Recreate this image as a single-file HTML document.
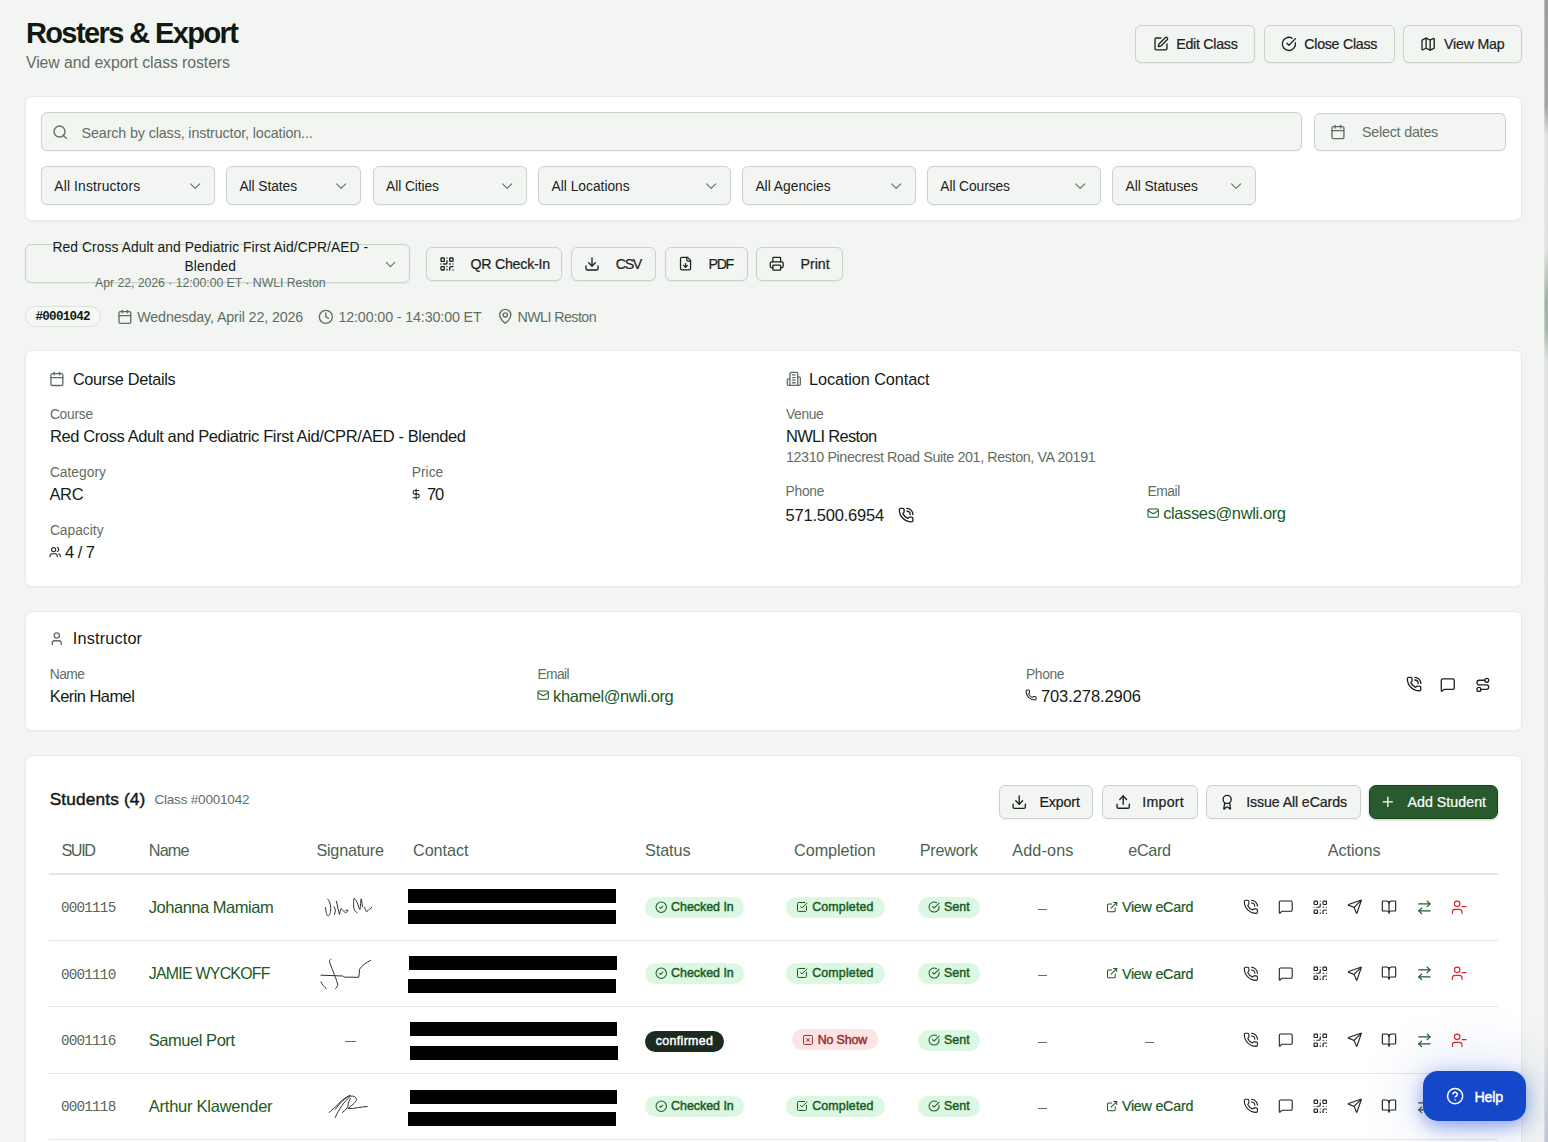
<!DOCTYPE html>
<html><head><meta charset="utf-8"><title>Rosters &amp; Export</title>
<style>
html,body{margin:0;padding:0;}
body{width:1548px;height:1142px;overflow:hidden;background:#f3f5f2;position:relative;font-family:'Liberation Sans',sans-serif;}
.t{position:absolute;white-space:nowrap;}
.r{position:absolute;}
.i{position:absolute;overflow:visible;}
</style></head><body>
<div class="t" style="left:25.90px;top:15.25px;font:700 29px/36px 'Liberation Sans',sans-serif;color:#111913;letter-spacing:-1.587px;">Rosters & Export</div>
<div class="t" style="left:26.00px;top:52.52px;font:400 15.8px/20px 'Liberation Sans',sans-serif;color:#5f6e63;letter-spacing:-0.075px;">View and export class rosters</div>
<div class="r" style="left:1135.10px;top:24.90px;width:120.30px;height:38.50px;background:#f3f5f2;border:1px solid #c9d3cb;border-radius:6px;box-sizing:border-box;box-shadow:0 1px 1px rgba(30,50,35,.05);"></div>
<svg class="i" style="left:1152.58px;top:36.39px;width:15.94px;height:15.94px" viewBox="0 0 24 24" fill="none" stroke="#1b231d" stroke-width="2" stroke-linecap="round" stroke-linejoin="round"><path d="M12 3H5a2 2 0 0 0-2 2v14a2 2 0 0 0 2 2h14a2 2 0 0 0 2-2v-7"/><path d="M18.375 2.625a1 1 0 0 1 3 3l-9.013 9.014a2 2 0 0 1-.853.505l-2.873.84a.5.5 0 0 1-.62-.62l.84-2.873a2 2 0 0 1 .506-.852z"/></svg>
<div class="t" style="left:1176.30px;top:35.18px;font:400 14.2px/18px 'Liberation Sans',sans-serif;color:#1b231d;letter-spacing:-0.267px;-webkit-text-stroke:0.22px #1b231d;">Edit Class</div>
<div class="r" style="left:1263.60px;top:24.90px;width:131.40px;height:38.50px;background:#f3f5f2;border:1px solid #c9d3cb;border-radius:6px;box-sizing:border-box;box-shadow:0 1px 1px rgba(30,50,35,.05);"></div>
<svg class="i" style="left:1280.59px;top:36.19px;width:15.81px;height:15.81px" viewBox="0 0 24 24" fill="none" stroke="#1b231d" stroke-width="2" stroke-linecap="round" stroke-linejoin="round"><path d="M21.801 10A10 10 0 1 1 17 3.335"/><path d="m9 11 3 3L22 4"/></svg>
<div class="t" style="left:1304.30px;top:35.18px;font:400 14.2px/18px 'Liberation Sans',sans-serif;color:#1b231d;letter-spacing:-0.265px;-webkit-text-stroke:0.22px #1b231d;">Close Class</div>
<div class="r" style="left:1403.20px;top:24.90px;width:118.80px;height:38.50px;background:#f3f5f2;border:1px solid #c9d3cb;border-radius:6px;box-sizing:border-box;box-shadow:0 1px 1px rgba(30,50,35,.05);"></div>
<svg class="i" style="left:1419.82px;top:35.97px;width:16.27px;height:16.27px" viewBox="0 0 24 24" fill="none" stroke="#1b231d" stroke-width="2" stroke-linecap="round" stroke-linejoin="round"><path d="M14.106 5.553a2 2 0 0 0 1.788 0l3.659-1.83A1 1 0 0 1 21 4.619v12.764a1 1 0 0 1-.553.894l-4.553 2.277a2 2 0 0 1-1.788 0l-4.212-2.106a2 2 0 0 0-1.788 0l-3.659 1.83A1 1 0 0 1 3 19.381V6.618a1 1 0 0 1 .553-.894l4.553-2.277a2 2 0 0 1 1.788 0z"/><path d="M15 5.764v15"/><path d="M9 3.236v15"/></svg>
<div class="t" style="left:1443.90px;top:35.18px;font:400 14.2px/18px 'Liberation Sans',sans-serif;color:#1b231d;letter-spacing:-0.171px;-webkit-text-stroke:0.22px #1b231d;">View Map</div>
<div class="r" style="left:25.20px;top:96.20px;width:1496.70px;height:125.00px;background:#fff;border:1px solid #e7eae6;border-radius:7px;box-sizing:border-box;box-shadow:0 1px 2px rgba(0,0,0,.03)"></div>
<div class="r" style="left:40.80px;top:112.30px;width:1260.90px;height:38.90px;background:#f3f5f2;border:1px solid #c9d3cb;border-radius:6px;box-sizing:border-box;box-shadow:0 1px 1px rgba(30,50,35,.05);"></div>
<svg class="i" style="left:52.32px;top:123.62px;width:16.45px;height:16.45px" viewBox="0 0 24 24" fill="none" stroke="#5f6e63" stroke-width="2" stroke-linecap="round" stroke-linejoin="round"><circle cx="11" cy="11" r="8"/><path d="m21 21-4.3-4.3"/></svg>
<div class="t" style="left:81.60px;top:123.64px;font:400 14.3px/18px 'Liberation Sans',sans-serif;color:#5f6e63;letter-spacing:-0.124px;">Search by class, instructor, location...</div>
<div class="r" style="left:1313.80px;top:112.60px;width:192.20px;height:38.40px;background:#f3f5f2;border:1px solid #c9d3cb;border-radius:6px;box-sizing:border-box;box-shadow:0 1px 1px rgba(30,50,35,.05);"></div>
<svg class="i" style="left:1330.49px;top:123.79px;width:15.92px;height:15.92px" viewBox="0 0 24 24" fill="none" stroke="#5f6e63" stroke-width="2" stroke-linecap="round" stroke-linejoin="round"><path d="M8 2v4"/><path d="M16 2v4"/><rect width="18" height="18" x="3" y="4" rx="2"/><path d="M3 10h18"/></svg>
<div class="t" style="left:1361.90px;top:123.34px;font:400 14.3px/18px 'Liberation Sans',sans-serif;color:#5f6e63;letter-spacing:-0.209px;">Select dates</div>
<div class="r" style="left:40.80px;top:166.40px;width:174.20px;height:38.60px;background:#f3f5f2;border:1px solid #c9d3cb;border-radius:6px;box-sizing:border-box;box-shadow:0 1px 1px rgba(30,50,35,.05);"></div>
<div class="t" style="left:54.30px;top:177.92px;font:400 13.8px/17px 'Liberation Sans',sans-serif;color:#1b231d;letter-spacing:0.157px;">All Instructors</div>
<svg class="i" style="left:185.79px;top:176.74px;width:18.32px;height:18.32px" viewBox="0 0 24 24" fill="none" stroke="#5f6e63" stroke-width="1.35" stroke-linecap="round" stroke-linejoin="round"><path d="m6 9 6 6 6-6"/></svg>
<div class="r" style="left:225.90px;top:166.40px;width:134.90px;height:38.60px;background:#f3f5f2;border:1px solid #c9d3cb;border-radius:6px;box-sizing:border-box;box-shadow:0 1px 1px rgba(30,50,35,.05);"></div>
<div class="t" style="left:239.40px;top:177.92px;font:400 13.8px/17px 'Liberation Sans',sans-serif;color:#1b231d;letter-spacing:-0.067px;">All States</div>
<svg class="i" style="left:331.59px;top:176.74px;width:18.32px;height:18.32px" viewBox="0 0 24 24" fill="none" stroke="#5f6e63" stroke-width="1.35" stroke-linecap="round" stroke-linejoin="round"><path d="m6 9 6 6 6-6"/></svg>
<div class="r" style="left:372.60px;top:166.40px;width:154.30px;height:38.60px;background:#f3f5f2;border:1px solid #c9d3cb;border-radius:6px;box-sizing:border-box;box-shadow:0 1px 1px rgba(30,50,35,.05);"></div>
<div class="t" style="left:386.10px;top:177.92px;font:400 13.8px/17px 'Liberation Sans',sans-serif;color:#1b231d;letter-spacing:-0.089px;">All Cities</div>
<svg class="i" style="left:497.69px;top:176.74px;width:18.32px;height:18.32px" viewBox="0 0 24 24" fill="none" stroke="#5f6e63" stroke-width="1.35" stroke-linecap="round" stroke-linejoin="round"><path d="m6 9 6 6 6-6"/></svg>
<div class="r" style="left:538.10px;top:166.40px;width:192.90px;height:38.60px;background:#f3f5f2;border:1px solid #c9d3cb;border-radius:6px;box-sizing:border-box;box-shadow:0 1px 1px rgba(30,50,35,.05);"></div>
<div class="t" style="left:551.60px;top:177.92px;font:400 13.8px/17px 'Liberation Sans',sans-serif;color:#1b231d;letter-spacing:-0.012px;">All Locations</div>
<svg class="i" style="left:701.79px;top:176.74px;width:18.32px;height:18.32px" viewBox="0 0 24 24" fill="none" stroke="#5f6e63" stroke-width="1.35" stroke-linecap="round" stroke-linejoin="round"><path d="m6 9 6 6 6-6"/></svg>
<div class="r" style="left:741.90px;top:166.40px;width:173.90px;height:38.60px;background:#f3f5f2;border:1px solid #c9d3cb;border-radius:6px;box-sizing:border-box;box-shadow:0 1px 1px rgba(30,50,35,.05);"></div>
<div class="t" style="left:755.40px;top:177.92px;font:400 13.8px/17px 'Liberation Sans',sans-serif;color:#1b231d;letter-spacing:0.009px;">All Agencies</div>
<svg class="i" style="left:886.59px;top:176.74px;width:18.32px;height:18.32px" viewBox="0 0 24 24" fill="none" stroke="#5f6e63" stroke-width="1.35" stroke-linecap="round" stroke-linejoin="round"><path d="m6 9 6 6 6-6"/></svg>
<div class="r" style="left:926.80px;top:166.40px;width:173.80px;height:38.60px;background:#f3f5f2;border:1px solid #c9d3cb;border-radius:6px;box-sizing:border-box;box-shadow:0 1px 1px rgba(30,50,35,.05);"></div>
<div class="t" style="left:940.30px;top:177.92px;font:400 13.8px/17px 'Liberation Sans',sans-serif;color:#1b231d;letter-spacing:-0.085px;">All Courses</div>
<svg class="i" style="left:1071.39px;top:176.74px;width:18.32px;height:18.32px" viewBox="0 0 24 24" fill="none" stroke="#5f6e63" stroke-width="1.35" stroke-linecap="round" stroke-linejoin="round"><path d="m6 9 6 6 6-6"/></svg>
<div class="r" style="left:1112.00px;top:166.40px;width:144.40px;height:38.60px;background:#f3f5f2;border:1px solid #c9d3cb;border-radius:6px;box-sizing:border-box;box-shadow:0 1px 1px rgba(30,50,35,.05);"></div>
<div class="t" style="left:1125.50px;top:177.92px;font:400 13.8px/17px 'Liberation Sans',sans-serif;color:#1b231d;letter-spacing:-0.050px;">All Statuses</div>
<svg class="i" style="left:1227.19px;top:176.74px;width:18.32px;height:18.32px" viewBox="0 0 24 24" fill="none" stroke="#5f6e63" stroke-width="1.35" stroke-linecap="round" stroke-linejoin="round"><path d="m6 9 6 6 6-6"/></svg>
<div class="r" style="left:24.90px;top:244.30px;width:385.10px;height:38.60px;background:#f3f5f2;border:1px solid #c9d3cb;border-radius:6px;box-sizing:border-box;box-shadow:0 1px 1px rgba(30,50,35,.05);"></div>
<div class="t" style="left:52.50px;top:238.72px;font:400 13.8px/17px 'Liberation Sans',sans-serif;color:#141b16;letter-spacing:0.090px;">Red Cross Adult and Pediatric First Aid/CPR/AED -</div>
<div class="t" style="left:184.50px;top:257.72px;font:400 13.8px/17px 'Liberation Sans',sans-serif;color:#141b16;letter-spacing:0.142px;">Blended</div>
<div class="t" style="left:95.00px;top:276.24px;font:400 12.3px/15px 'Liberation Sans',sans-serif;color:#5f6e63;letter-spacing:-0.042px;">Apr 22, 2026 · 12:00:00 ET · NWLI Reston</div>
<svg class="i" style="left:381.82px;top:255.62px;width:16.97px;height:16.97px" viewBox="0 0 24 24" fill="none" stroke="#5f6e63" stroke-width="1.6" stroke-linecap="round" stroke-linejoin="round"><path d="m6 9 6 6 6-6"/></svg>
<div class="r" style="left:426.10px;top:247.40px;width:136.40px;height:33.20px;background:#f3f5f2;border:1px solid #c9d3cb;border-radius:6px;box-sizing:border-box;box-shadow:0 1px 1px rgba(30,50,35,.05);"></div>
<svg class="i" style="left:438.84px;top:255.99px;width:16.02px;height:16.02px" viewBox="0 0 24 24" fill="none" stroke="#1b231d" stroke-width="2" stroke-linecap="round" stroke-linejoin="round"><rect width="5" height="5" x="3" y="3" rx="1"/><rect width="5" height="5" x="16" y="3" rx="1"/><rect width="5" height="5" x="3" y="16" rx="1"/><path d="M21 16h-3a2 2 0 0 0-2 2v3"/><path d="M21 21v.01"/><path d="M12 7v3a2 2 0 0 1-2 2H7"/><path d="M3 12h.01"/><path d="M12 3h.01"/><path d="M12 16v.01"/><path d="M16 12h1"/><path d="M21 12v.01"/><path d="M12 21v-1"/></svg>
<div class="t" style="left:470.40px;top:254.68px;font:400 14.2px/18px 'Liberation Sans',sans-serif;color:#1b231d;letter-spacing:-0.225px;-webkit-text-stroke:0.22px #1b231d;">QR Check-In</div>
<div class="r" style="left:571.40px;top:247.40px;width:84.80px;height:33.20px;background:#f3f5f2;border:1px solid #c9d3cb;border-radius:6px;box-sizing:border-box;box-shadow:0 1px 1px rgba(30,50,35,.05);"></div>
<svg class="i" style="left:584.14px;top:255.99px;width:16.02px;height:16.02px" viewBox="0 0 24 24" fill="none" stroke="#1b231d" stroke-width="2" stroke-linecap="round" stroke-linejoin="round"><path d="M21 15v4a2 2 0 0 1-2 2H5a2 2 0 0 1-2-2v-4"/><polyline points="7 10 12 15 17 10"/><line x1="12" x2="12" y1="15" y2="3"/></svg>
<div class="t" style="left:615.80px;top:254.68px;font:400 14.2px/18px 'Liberation Sans',sans-serif;color:#1b231d;letter-spacing:-1.400px;-webkit-text-stroke:0.22px #1b231d;">CSV</div>
<div class="r" style="left:664.50px;top:247.40px;width:83.10px;height:33.20px;background:#f3f5f2;border:1px solid #c9d3cb;border-radius:6px;box-sizing:border-box;box-shadow:0 1px 1px rgba(30,50,35,.05);"></div>
<svg class="i" style="left:677.51px;top:256.46px;width:15.08px;height:15.08px" viewBox="0 0 24 24" fill="none" stroke="#1b231d" stroke-width="2" stroke-linecap="round" stroke-linejoin="round"><path d="M15 2H6a2 2 0 0 0-2 2v16a2 2 0 0 0 2 2h12a2 2 0 0 0 2-2V7Z"/><path d="M14 2v4a2 2 0 0 0 2 2h4"/><path d="M12 18v-6"/><path d="m9 15 3 3 3-3"/></svg>
<div class="t" style="left:708.50px;top:254.68px;font:400 14.2px/18px 'Liberation Sans',sans-serif;color:#1b231d;letter-spacing:-1.300px;-webkit-text-stroke:0.22px #1b231d;">PDF</div>
<div class="r" style="left:756.20px;top:247.40px;width:86.70px;height:33.20px;background:#f3f5f2;border:1px solid #c9d3cb;border-radius:6px;box-sizing:border-box;box-shadow:0 1px 1px rgba(30,50,35,.05);"></div>
<svg class="i" style="left:769.36px;top:256.26px;width:15.48px;height:15.48px" viewBox="0 0 24 24" fill="none" stroke="#1b231d" stroke-width="2" stroke-linecap="round" stroke-linejoin="round"><path d="M6 18H4a2 2 0 0 1-2-2v-5a2 2 0 0 1 2-2h16a2 2 0 0 1 2 2v5a2 2 0 0 1-2 2h-2"/><path d="M6 9V3a1 1 0 0 1 1-1h10a1 1 0 0 1 1 1v6"/><rect x="6" y="14" width="12" height="8" rx="1"/></svg>
<div class="t" style="left:800.50px;top:254.68px;font:400 14.2px/18px 'Liberation Sans',sans-serif;color:#1b231d;letter-spacing:-0.025px;-webkit-text-stroke:0.22px #1b231d;">Print</div>
<div class="r" style="left:25.20px;top:306.20px;width:76.10px;height:20.80px;border:1px solid #dde2dd;border-radius:11px;box-sizing:border-box;background:#f6f8f5"></div>
<div class="t" style="left:35.50px;top:309.45px;font:700 12.6px/16px 'Liberation Mono',monospace;color:#111913;letter-spacing:-0.757px;">#0001042</div>
<svg class="i" style="left:116.88px;top:308.63px;width:15.74px;height:15.74px" viewBox="0 0 24 24" fill="none" stroke="#5f6e63" stroke-width="2" stroke-linecap="round" stroke-linejoin="round"><path d="M8 2v4"/><path d="M16 2v4"/><rect width="18" height="18" x="3" y="4" rx="2"/><path d="M3 10h18"/></svg>
<div class="t" style="left:137.20px;top:307.74px;font:400 14.3px/18px 'Liberation Sans',sans-serif;color:#5f6e63;letter-spacing:-0.146px;">Wednesday, April 22, 2026</div>
<svg class="i" style="left:318.35px;top:308.95px;width:15.70px;height:15.70px" viewBox="0 0 24 24" fill="none" stroke="#5f6e63" stroke-width="2" stroke-linecap="round" stroke-linejoin="round"><circle cx="12" cy="12" r="10"/><polyline points="12 6 12 12 16 14"/></svg>
<div class="t" style="left:338.40px;top:307.74px;font:400 14.3px/18px 'Liberation Sans',sans-serif;color:#5f6e63;letter-spacing:-0.138px;">12:00:00 - 14:30:00 ET</div>
<svg class="i" style="left:496.72px;top:308.42px;width:16.57px;height:16.57px" viewBox="0 0 24 24" fill="none" stroke="#5f6e63" stroke-width="2" stroke-linecap="round" stroke-linejoin="round"><path d="M20 10c0 4.993-5.539 10.193-7.399 11.799a1 1 0 0 1-1.202 0C9.539 20.193 4 14.993 4 10a8 8 0 0 1 16 0"/><circle cx="12" cy="10" r="3"/></svg>
<div class="t" style="left:517.40px;top:307.74px;font:400 14.3px/18px 'Liberation Sans',sans-serif;color:#5f6e63;letter-spacing:-0.575px;">NWLI Reston</div>
<div class="r" style="left:25.20px;top:350.20px;width:1496.70px;height:237.20px;background:#fff;border:1px solid #e7eae6;border-radius:7px;box-sizing:border-box;box-shadow:0 1px 2px rgba(0,0,0,.03)"></div>
<svg class="i" style="left:48.85px;top:370.55px;width:15.80px;height:15.80px" viewBox="0 0 24 24" fill="none" stroke="#5f6e63" stroke-width="2" stroke-linecap="round" stroke-linejoin="round"><path d="M8 2v4"/><path d="M16 2v4"/><rect width="18" height="18" x="3" y="4" rx="2"/><path d="M3 10h18"/></svg>
<div class="t" style="left:72.90px;top:368.55px;font:400 16.3px/20px 'Liberation Sans',sans-serif;color:#141b16;letter-spacing:-0.308px;">Course Details</div>
<div class="t" style="left:49.90px;top:405.52px;font:400 13.8px/17px 'Liberation Sans',sans-serif;color:#5f6e63;letter-spacing:-0.240px;">Course</div>
<div class="t" style="left:49.90px;top:425.78px;font:400 16.5px/21px 'Liberation Sans',sans-serif;color:#141b16;letter-spacing:-0.381px;">Red Cross Adult and Pediatric First Aid/CPR/AED - Blended</div>
<div class="t" style="left:49.90px;top:463.92px;font:400 13.8px/17px 'Liberation Sans',sans-serif;color:#5f6e63;letter-spacing:0.000px;">Category</div>
<div class="t" style="left:49.40px;top:484.08px;font:400 16.5px/21px 'Liberation Sans',sans-serif;color:#141b16;letter-spacing:-0.300px;">ARC</div>
<div class="t" style="left:411.80px;top:463.92px;font:400 13.8px/17px 'Liberation Sans',sans-serif;color:#5f6e63;letter-spacing:0.000px;">Price</div>
<svg class="i" style="left:410.37px;top:487.52px;width:12.27px;height:12.27px" viewBox="0 0 24 24" fill="none" stroke="#1b231d" stroke-width="2" stroke-linecap="round" stroke-linejoin="round"><line x1="12" x2="12" y1="2" y2="22"/><path d="M17 5H9.5a3.5 3.5 0 0 0 0 7h5a3.5 3.5 0 0 1 0 7H6"/></svg>
<div class="t" style="left:427.00px;top:484.08px;font:400 16.5px/21px 'Liberation Sans',sans-serif;color:#141b16;letter-spacing:-1.150px;">70</div>
<div class="t" style="left:49.90px;top:522.12px;font:400 13.8px/17px 'Liberation Sans',sans-serif;color:#5f6e63;letter-spacing:0.000px;">Capacity</div>
<svg class="i" style="left:48.78px;top:546.18px;width:12.35px;height:12.35px" viewBox="0 0 24 24" fill="none" stroke="#1b231d" stroke-width="2" stroke-linecap="round" stroke-linejoin="round"><path d="M16 21v-2a4 4 0 0 0-4-4H6a4 4 0 0 0-4 4v2"/><circle cx="9" cy="7" r="4"/><path d="M22 21v-2a4 4 0 0 0-3-3.87"/><path d="M16 3.13a4 4 0 0 1 0 7.75"/></svg>
<div class="t" style="left:65.00px;top:541.68px;font:400 16.5px/21px 'Liberation Sans',sans-serif;color:#141b16;letter-spacing:-0.550px;">4 / 7</div>
<svg class="i" style="left:785.50px;top:370.80px;width:15.70px;height:15.70px" viewBox="0 0 24 24" fill="none" stroke="#5f6e63" stroke-width="2" stroke-linecap="round" stroke-linejoin="round"><path d="M6 22V4a2 2 0 0 1 2-2h8a2 2 0 0 1 2 2v18Z"/><path d="M6 12H4a2 2 0 0 0-2 2v6a2 2 0 0 0 2 2h2"/><path d="M18 9h2a2 2 0 0 1 2 2v9a2 2 0 0 1-2 2h-2"/><path d="M10 6h4"/><path d="M10 10h4"/><path d="M10 14h4"/><path d="M10 18h4"/></svg>
<div class="t" style="left:809.00px;top:368.55px;font:400 16.3px/20px 'Liberation Sans',sans-serif;color:#141b16;letter-spacing:-0.103px;">Location Contact</div>
<div class="t" style="left:786.00px;top:406.02px;font:400 13.8px/17px 'Liberation Sans',sans-serif;color:#5f6e63;letter-spacing:-0.338px;">Venue</div>
<div class="t" style="left:786.00px;top:425.68px;font:400 16.5px/21px 'Liberation Sans',sans-serif;color:#141b16;letter-spacing:-0.700px;">NWLI Reston</div>
<div class="t" style="left:786.00px;top:448.14px;font:400 14.3px/18px 'Liberation Sans',sans-serif;color:#5f6e63;letter-spacing:-0.390px;">12310 Pinecrest Road Suite 201, Reston, VA 20191</div>
<div class="t" style="left:785.50px;top:482.62px;font:400 13.8px/17px 'Liberation Sans',sans-serif;color:#5f6e63;letter-spacing:-0.225px;">Phone</div>
<div class="t" style="left:785.50px;top:505.18px;font:400 16.5px/21px 'Liberation Sans',sans-serif;color:#141b16;letter-spacing:-0.205px;">571.500.6954</div>
<svg class="i" style="left:898.17px;top:506.87px;width:16.26px;height:16.26px" viewBox="0 0 24 24" fill="none" stroke="#1b231d" stroke-width="2" stroke-linecap="round" stroke-linejoin="round"><path d="M13 2a9 9 0 0 1 9 9"/><path d="M13 6a5 5 0 0 1 5 5"/><path d="M13.832 16.568a1 1 0 0 0 1.213-.303l.355-.465A2 2 0 0 1 17 15h3a2 2 0 0 1 2 2v3a2 2 0 0 1-2 2A18 18 0 0 1 2 4a2 2 0 0 1 2-2h3a2 2 0 0 1 2 2v3a2 2 0 0 1-.8 1.6l-.468.351a1 1 0 0 0-.292 1.233 14 14 0 0 0 6.392 6.384"/></svg>
<div class="t" style="left:1147.50px;top:482.62px;font:400 13.8px/17px 'Liberation Sans',sans-serif;color:#5f6e63;letter-spacing:-0.425px;">Email</div>
<svg class="i" style="left:1146.93px;top:507.03px;width:12.35px;height:12.35px" viewBox="0 0 24 24" fill="none" stroke="#1b5a24" stroke-width="2" stroke-linecap="round" stroke-linejoin="round"><rect width="20" height="16" x="2" y="4" rx="2"/><path d="m22 7-8.97 5.7a1.94 1.94 0 0 1-2.06 0L2 7"/></svg>
<div class="t" style="left:1163.20px;top:503.38px;font:400 16.5px/21px 'Liberation Sans',sans-serif;color:#1b5a24;letter-spacing:-0.387px;">classes@nwli.org</div>
<div class="r" style="left:25.20px;top:610.50px;width:1496.70px;height:120.80px;background:#fff;border:1px solid #e7eae6;border-radius:7px;box-sizing:border-box;box-shadow:0 1px 2px rgba(0,0,0,.03)"></div>
<svg class="i" style="left:48.81px;top:630.86px;width:15.59px;height:15.59px" viewBox="0 0 24 24" fill="none" stroke="#5f6e63" stroke-width="2" stroke-linecap="round" stroke-linejoin="round"><path d="M19 21v-2a4 4 0 0 0-4-4H9a4 4 0 0 0-4 4v2"/><circle cx="12" cy="7" r="4"/></svg>
<div class="t" style="left:72.80px;top:628.35px;font:400 16.3px/20px 'Liberation Sans',sans-serif;color:#141b16;letter-spacing:0.150px;">Instructor</div>
<div class="t" style="left:49.70px;top:665.52px;font:400 13.8px/17px 'Liberation Sans',sans-serif;color:#5f6e63;letter-spacing:-0.500px;">Name</div>
<div class="t" style="left:49.70px;top:685.58px;font:400 16.5px/21px 'Liberation Sans',sans-serif;color:#141b16;letter-spacing:-0.560px;">Kerin Hamel</div>
<div class="t" style="left:537.40px;top:665.52px;font:400 13.8px/17px 'Liberation Sans',sans-serif;color:#5f6e63;letter-spacing:-0.575px;">Email</div>
<svg class="i" style="left:536.83px;top:689.23px;width:12.35px;height:12.35px" viewBox="0 0 24 24" fill="none" stroke="#1b5a24" stroke-width="2" stroke-linecap="round" stroke-linejoin="round"><rect width="20" height="16" x="2" y="4" rx="2"/><path d="m22 7-8.97 5.7a1.94 1.94 0 0 1-2.06 0L2 7"/></svg>
<div class="t" style="left:553.10px;top:685.58px;font:400 16.5px/21px 'Liberation Sans',sans-serif;color:#1b5a24;letter-spacing:-0.436px;">khamel@nwli.org</div>
<div class="t" style="left:1026.00px;top:665.52px;font:400 13.8px/17px 'Liberation Sans',sans-serif;color:#5f6e63;letter-spacing:-0.350px;">Phone</div>
<svg class="i" style="left:1025.34px;top:689.34px;width:12.11px;height:12.11px" viewBox="0 0 24 24" fill="none" stroke="#1b231d" stroke-width="2" stroke-linecap="round" stroke-linejoin="round"><path d="M13.832 16.568a1 1 0 0 0 1.213-.303l.355-.465A2 2 0 0 1 17 15h3a2 2 0 0 1 2 2v3a2 2 0 0 1-2 2A18 18 0 0 1 2 4a2 2 0 0 1 2-2h3a2 2 0 0 1 2 2v3a2 2 0 0 1-.8 1.6l-.468.351a1 1 0 0 0-.292 1.233 14 14 0 0 0 6.392 6.384"/></svg>
<div class="t" style="left:1040.90px;top:685.58px;font:400 16.5px/21px 'Liberation Sans',sans-serif;color:#141b16;letter-spacing:-0.077px;">703.278.2906</div>
<svg class="i" style="left:1405.88px;top:676.28px;width:16.15px;height:16.15px" viewBox="0 0 24 24" fill="none" stroke="#1b231d" stroke-width="2" stroke-linecap="round" stroke-linejoin="round"><path d="M13 2a9 9 0 0 1 9 9"/><path d="M13 6a5 5 0 0 1 5 5"/><path d="M13.832 16.568a1 1 0 0 0 1.213-.303l.355-.465A2 2 0 0 1 17 15h3a2 2 0 0 1 2 2v3a2 2 0 0 1-2 2A18 18 0 0 1 2 4a2 2 0 0 1 2-2h3a2 2 0 0 1 2 2v3a2 2 0 0 1-.8 1.6l-.468.351a1 1 0 0 0-.292 1.233 14 14 0 0 0 6.392 6.384"/></svg>
<svg class="i" style="left:1440.37px;top:676.57px;width:15.56px;height:15.56px" viewBox="0 0 24 24" fill="none" stroke="#1b231d" stroke-width="2" stroke-linecap="round" stroke-linejoin="round"><path d="M22 17a2 2 0 0 1-2 2H6.828a2 2 0 0 0-1.414.586l-2.202 2.202A.71.71 0 0 1 2 21.286V5a2 2 0 0 1 2-2h16a2 2 0 0 1 2 2z"/></svg>
<svg class="i" style="left:1475.31px;top:676.61px;width:15.68px;height:15.68px" viewBox="0 0 24 24" fill="none" stroke="#1b231d" stroke-width="2" stroke-linecap="round" stroke-linejoin="round"><circle cx="6" cy="19" r="3"/><path d="M9 19h8.5a3.5 3.5 0 0 0 0-7h-11a3.5 3.5 0 0 1 0-7H15"/><circle cx="18" cy="5" r="3"/></svg>
<div class="r" style="left:25.20px;top:755.30px;width:1496.70px;height:404.70px;background:#fff;border:1px solid #e7eae6;border-radius:7px;box-sizing:border-box;box-shadow:0 1px 2px rgba(0,0,0,.03)"></div>
<div class="t" style="left:49.70px;top:787.80px;font:400 17.3px/22px 'Liberation Sans',sans-serif;color:#141b16;letter-spacing:0.141px;-webkit-text-stroke:0.45px #141b16;">Students (4)</div>
<div class="t" style="left:154.40px;top:790.62px;font:400 13.5px/17px 'Liberation Sans',sans-serif;color:#5f6e63;letter-spacing:-0.188px;">Class #0001042</div>
<div class="r" style="left:998.70px;top:784.70px;width:94.80px;height:34.40px;background:#f3f5f2;border:1px solid #c9d3cb;border-radius:6px;box-sizing:border-box;box-shadow:0 1px 1px rgba(30,50,35,.05);"></div>
<svg class="i" style="left:1011.35px;top:793.80px;width:16.39px;height:16.39px" viewBox="0 0 24 24" fill="none" stroke="#1b231d" stroke-width="2" stroke-linecap="round" stroke-linejoin="round"><path d="M21 15v4a2 2 0 0 1-2 2H5a2 2 0 0 1-2-2v-4"/><polyline points="7 10 12 15 17 10"/><line x1="12" x2="12" y1="15" y2="3"/></svg>
<div class="t" style="left:1039.40px;top:793.28px;font:400 14.2px/18px 'Liberation Sans',sans-serif;color:#1b231d;letter-spacing:-0.090px;-webkit-text-stroke:0.22px #1b231d;">Export</div>
<div class="r" style="left:1101.80px;top:784.70px;width:95.90px;height:34.40px;background:#f3f5f2;border:1px solid #c9d3cb;border-radius:6px;box-sizing:border-box;box-shadow:0 1px 1px rgba(30,50,35,.05);"></div>
<svg class="i" style="left:1114.54px;top:793.84px;width:16.33px;height:16.33px" viewBox="0 0 24 24" fill="none" stroke="#1b231d" stroke-width="2" stroke-linecap="round" stroke-linejoin="round"><path d="M21 15v4a2 2 0 0 1-2 2H5a2 2 0 0 1-2-2v-4"/><polyline points="17 8 12 3 7 8"/><line x1="12" x2="12" y1="3" y2="15"/></svg>
<div class="t" style="left:1142.20px;top:793.28px;font:400 14.2px/18px 'Liberation Sans',sans-serif;color:#1b231d;letter-spacing:0.270px;-webkit-text-stroke:0.22px #1b231d;">Import</div>
<div class="r" style="left:1205.60px;top:784.70px;width:155.60px;height:34.40px;background:#f3f5f2;border:1px solid #c9d3cb;border-radius:6px;box-sizing:border-box;box-shadow:0 1px 1px rgba(30,50,35,.05);"></div>
<svg class="i" style="left:1218.68px;top:793.83px;width:16.33px;height:16.33px" viewBox="0 0 24 24" fill="none" stroke="#1b231d" stroke-width="2" stroke-linecap="round" stroke-linejoin="round"><path d="m15.477 12.89 1.515 8.526a.5.5 0 0 1-.81.47l-3.58-2.687a1 1 0 0 0-1.197 0l-3.586 2.686a.5.5 0 0 1-.81-.469l1.514-8.526"/><circle cx="12" cy="8" r="6"/></svg>
<div class="t" style="left:1246.30px;top:793.28px;font:400 14.2px/18px 'Liberation Sans',sans-serif;color:#1b231d;letter-spacing:-0.120px;-webkit-text-stroke:0.22px #1b231d;">Issue All eCards</div>
<div class="r" style="left:1369.20px;top:784.70px;width:129.10px;height:34.40px;background:#285a2d;border:1px solid #12481a;border-radius:7px;box-sizing:border-box;box-shadow:0 1px 1px rgba(30,50,35,.05);box-shadow:0 1px 3px rgba(0,0,0,.22)"></div>
<svg class="i" style="left:1380.18px;top:794.18px;width:15.74px;height:15.74px" viewBox="0 0 24 24" fill="none" stroke="#fff" stroke-width="2" stroke-linecap="round" stroke-linejoin="round"><path d="M5 12h14"/><path d="M12 5v14"/></svg>
<div class="t" style="left:1407.50px;top:793.28px;font:400 14.2px/18px 'Liberation Sans',sans-serif;color:#fff;letter-spacing:0.045px;-webkit-text-stroke:0.22px #fff;">Add Student</div>
<div class="t" style="left:61.40px;top:839.98px;font:400 16.2px/20px 'Liberation Sans',sans-serif;color:#4d6152;letter-spacing:-1.367px;">SUID</div>
<div class="t" style="left:148.80px;top:839.98px;font:400 16.2px/20px 'Liberation Sans',sans-serif;color:#4d6152;letter-spacing:-0.833px;">Name</div>
<div class="t" style="left:316.40px;top:839.98px;font:400 16.2px/20px 'Liberation Sans',sans-serif;color:#4d6152;letter-spacing:-0.206px;">Signature</div>
<div class="t" style="left:413.00px;top:839.98px;font:400 16.2px/20px 'Liberation Sans',sans-serif;color:#4d6152;letter-spacing:-0.058px;">Contact</div>
<div class="t" style="left:645.00px;top:839.98px;font:400 16.2px/20px 'Liberation Sans',sans-serif;color:#4d6152;letter-spacing:-0.070px;">Status</div>
<div class="t" style="left:794.10px;top:839.98px;font:400 16.2px/20px 'Liberation Sans',sans-serif;color:#4d6152;letter-spacing:-0.061px;">Completion</div>
<div class="t" style="left:919.70px;top:839.98px;font:400 16.2px/20px 'Liberation Sans',sans-serif;color:#4d6152;letter-spacing:-0.192px;">Prework</div>
<div class="t" style="left:1012.20px;top:839.98px;font:400 16.2px/20px 'Liberation Sans',sans-serif;color:#4d6152;letter-spacing:0.158px;">Add-ons</div>
<div class="t" style="left:1128.30px;top:839.98px;font:400 16.2px/20px 'Liberation Sans',sans-serif;color:#4d6152;letter-spacing:-0.350px;">eCard</div>
<div class="t" style="left:1327.80px;top:839.98px;font:400 16.2px/20px 'Liberation Sans',sans-serif;color:#4d6152;letter-spacing:-0.067px;">Actions</div>
<div class="r" style="left:48.90px;top:873.00px;width:1449.10px;height:1.50px;background:#e3e7e3"></div>
<div class="r" style="left:48.90px;top:939.50px;width:1449.10px;height:1.20px;background:#e3e7e3"></div>
<div class="t" style="left:61.00px;top:899.29px;font:400 14.3px/18px 'Liberation Mono',monospace;color:#56675b;letter-spacing:-0.808px;">0001115</div>
<div class="t" style="left:148.80px;top:896.88px;font:400 16.5px/21px 'Liberation Sans',sans-serif;color:#1b5a24;letter-spacing:-0.481px;">Johanna Mamiam</div>
<div class="r" style="left:645.10px;top:896.70px;width:99.10px;height:20.90px;background:#dcf8e2;border-radius:11px"></div>
<svg class="i" style="left:655.25px;top:900.70px;width:12.50px;height:12.50px" viewBox="0 0 24 24" fill="none" stroke="#1b5a24" stroke-width="2" stroke-linecap="round" stroke-linejoin="round"><circle cx="12" cy="12" r="10"/><path d="m9 12 2 2 4-4"/></svg>
<div class="t" style="left:671.10px;top:898.60px;font:400 12.4px/16px 'Liberation Sans',sans-serif;color:#1b5a24;letter-spacing:-0.006px;-webkit-text-stroke:0.45px #1b5a24;">Checked In</div>
<div class="r" style="left:785.80px;top:896.70px;width:99.10px;height:20.90px;background:#dcf8e2;border-radius:11px"></div>
<svg class="i" style="left:795.93px;top:900.78px;width:11.94px;height:11.94px" viewBox="0 0 24 24" fill="none" stroke="#1b5a24" stroke-width="2" stroke-linecap="round" stroke-linejoin="round"><path d="M21 10.5V19a2 2 0 0 1-2 2H5a2 2 0 0 1-2-2V5a2 2 0 0 1 2-2h12.5"/><path d="m9 11 3 3L22 4"/></svg>
<div class="t" style="left:812.20px;top:898.60px;font:400 12.4px/16px 'Liberation Sans',sans-serif;color:#1b5a24;letter-spacing:0.169px;-webkit-text-stroke:0.45px #1b5a24;">Completed</div>
<div class="r" style="left:917.60px;top:896.60px;width:62.50px;height:21.00px;background:#dcf8e2;border-radius:11px"></div>
<svg class="i" style="left:927.94px;top:900.94px;width:12.11px;height:12.11px" viewBox="0 0 24 24" fill="none" stroke="#1b5a24" stroke-width="2" stroke-linecap="round" stroke-linejoin="round"><path d="M21.801 10A10 10 0 1 1 17 3.335"/><path d="m9 11 3 3L22 4"/></svg>
<div class="t" style="left:944.00px;top:898.60px;font:400 12.4px/16px 'Liberation Sans',sans-serif;color:#1b5a24;letter-spacing:0.067px;-webkit-text-stroke:0.45px #1b5a24;">Sent</div>
<div class="r" style="left:1038.20px;top:908.50px;width:9.00px;height:1.20px;background:#5f6e63"></div>
<svg class="i" style="left:1105.88px;top:900.98px;width:12.25px;height:12.25px" viewBox="0 0 24 24" fill="none" stroke="#1b5a24" stroke-width="2" stroke-linecap="round" stroke-linejoin="round"><path d="M15 3h6v6"/><path d="M10 14 21 3"/><path d="M18 13v6a2 2 0 0 1-2 2H5a2 2 0 0 1-2-2V8a2 2 0 0 1 2-2h6"/></svg>
<div class="t" style="left:1121.90px;top:898.04px;font:400 14.3px/18px 'Liberation Sans',sans-serif;color:#1b5a24;letter-spacing:-0.239px;-webkit-text-stroke:0.22px #1b5a24;">View eCard</div>
<svg class="i" style="left:1243.13px;top:899.13px;width:15.74px;height:15.74px" viewBox="0 0 24 24" fill="none" stroke="#1b231d" stroke-width="1.7" stroke-linecap="round" stroke-linejoin="round"><path d="M13 2a9 9 0 0 1 9 9"/><path d="M13 6a5 5 0 0 1 5 5"/><path d="M13.832 16.568a1 1 0 0 0 1.213-.303l.355-.465A2 2 0 0 1 17 15h3a2 2 0 0 1 2 2v3a2 2 0 0 1-2 2A18 18 0 0 1 2 4a2 2 0 0 1 2-2h3a2 2 0 0 1 2 2v3a2 2 0 0 1-.8 1.6l-.468.351a1 1 0 0 0-.292 1.233 14 14 0 0 0 6.392 6.384"/></svg>
<svg class="i" style="left:1277.66px;top:899.16px;width:15.49px;height:15.49px" viewBox="0 0 24 24" fill="none" stroke="#1b231d" stroke-width="1.7" stroke-linecap="round" stroke-linejoin="round"><path d="M22 17a2 2 0 0 1-2 2H6.828a2 2 0 0 0-1.414.586l-2.202 2.202A.71.71 0 0 1 2 21.286V5a2 2 0 0 1 2-2h16a2 2 0 0 1 2 2z"/></svg>
<svg class="i" style="left:1312.05px;top:898.75px;width:16.51px;height:16.51px" viewBox="0 0 24 24" fill="none" stroke="#1b231d" stroke-width="1.7" stroke-linecap="round" stroke-linejoin="round"><rect width="5" height="5" x="3" y="3" rx="1"/><rect width="5" height="5" x="16" y="3" rx="1"/><rect width="5" height="5" x="3" y="16" rx="1"/><path d="M21 16h-3a2 2 0 0 0-2 2v3"/><path d="M21 21v.01"/><path d="M12 7v3a2 2 0 0 1-2 2H7"/><path d="M3 12h.01"/><path d="M12 3h.01"/><path d="M12 16v.01"/><path d="M16 12h1"/><path d="M21 12v.01"/><path d="M12 21v-1"/></svg>
<svg class="i" style="left:1347.24px;top:899.24px;width:15.52px;height:15.52px" viewBox="0 0 24 24" fill="none" stroke="#1b231d" stroke-width="1.7" stroke-linecap="round" stroke-linejoin="round"><path d="M14.536 21.686a.5.5 0 0 0 .937-.024l6.5-19a.496.496 0 0 0-.635-.635l-19 6.5a.5.5 0 0 0-.024.937l7.93 3.18a2 2 0 0 1 1.112 1.11z"/><path d="m21.854 2.147-10.94 10.939"/></svg>
<svg class="i" style="left:1381.44px;top:898.99px;width:16.01px;height:16.01px" viewBox="0 0 24 24" fill="none" stroke="#1b231d" stroke-width="1.7" stroke-linecap="round" stroke-linejoin="round"><path d="M12 7v14"/><path d="M3 18a1 1 0 0 1-1-1V4a1 1 0 0 1 1-1h5a4 4 0 0 1 4 4 4 4 0 0 1 4-4h5a1 1 0 0 1 1 1v13a1 1 0 0 1-1 1h-6a3 3 0 0 0-3 3 3 3 0 0 0-3-3z"/></svg>
<svg class="i" style="left:1415.81px;top:898.61px;width:16.77px;height:16.77px" viewBox="0 0 24 24" fill="none" stroke="#1b5a24" stroke-width="1.7" stroke-linecap="round" stroke-linejoin="round"><path d="m16 3 4 4-4 4"/><path d="M20 7H4"/><path d="m8 21-4-4 4-4"/><path d="M4 17h16"/></svg>
<svg class="i" style="left:1450.62px;top:898.77px;width:16.47px;height:16.47px" viewBox="0 0 24 24" fill="none" stroke="#dc2626" stroke-width="1.7" stroke-linecap="round" stroke-linejoin="round"><path d="M16 21v-2a4 4 0 0 0-4-4H6a4 4 0 0 0-4 4v2"/><circle cx="9" cy="7" r="4"/><line x1="22" x2="16" y1="11" y2="11"/></svg>
<div class="r" style="left:48.90px;top:1006.00px;width:1449.10px;height:1.20px;background:#e3e7e3"></div>
<div class="t" style="left:61.00px;top:965.79px;font:400 14.3px/18px 'Liberation Mono',monospace;color:#56675b;letter-spacing:-0.808px;">0001110</div>
<div class="t" style="left:148.80px;top:964.09px;font:400 15.9px/20px 'Liberation Sans',sans-serif;color:#1b5a24;letter-spacing:-0.746px;">JAMIE WYCKOFF</div>
<div class="r" style="left:645.10px;top:963.20px;width:99.10px;height:20.90px;background:#dcf8e2;border-radius:11px"></div>
<svg class="i" style="left:655.25px;top:967.20px;width:12.50px;height:12.50px" viewBox="0 0 24 24" fill="none" stroke="#1b5a24" stroke-width="2" stroke-linecap="round" stroke-linejoin="round"><circle cx="12" cy="12" r="10"/><path d="m9 12 2 2 4-4"/></svg>
<div class="t" style="left:671.10px;top:965.10px;font:400 12.4px/16px 'Liberation Sans',sans-serif;color:#1b5a24;letter-spacing:-0.006px;-webkit-text-stroke:0.45px #1b5a24;">Checked In</div>
<div class="r" style="left:785.80px;top:963.20px;width:99.10px;height:20.90px;background:#dcf8e2;border-radius:11px"></div>
<svg class="i" style="left:795.93px;top:967.28px;width:11.94px;height:11.94px" viewBox="0 0 24 24" fill="none" stroke="#1b5a24" stroke-width="2" stroke-linecap="round" stroke-linejoin="round"><path d="M21 10.5V19a2 2 0 0 1-2 2H5a2 2 0 0 1-2-2V5a2 2 0 0 1 2-2h12.5"/><path d="m9 11 3 3L22 4"/></svg>
<div class="t" style="left:812.20px;top:965.10px;font:400 12.4px/16px 'Liberation Sans',sans-serif;color:#1b5a24;letter-spacing:0.169px;-webkit-text-stroke:0.45px #1b5a24;">Completed</div>
<div class="r" style="left:917.60px;top:963.10px;width:62.50px;height:21.00px;background:#dcf8e2;border-radius:11px"></div>
<svg class="i" style="left:927.94px;top:967.44px;width:12.11px;height:12.11px" viewBox="0 0 24 24" fill="none" stroke="#1b5a24" stroke-width="2" stroke-linecap="round" stroke-linejoin="round"><path d="M21.801 10A10 10 0 1 1 17 3.335"/><path d="m9 11 3 3L22 4"/></svg>
<div class="t" style="left:944.00px;top:965.10px;font:400 12.4px/16px 'Liberation Sans',sans-serif;color:#1b5a24;letter-spacing:0.067px;-webkit-text-stroke:0.45px #1b5a24;">Sent</div>
<div class="r" style="left:1038.20px;top:975.00px;width:9.00px;height:1.20px;background:#5f6e63"></div>
<svg class="i" style="left:1105.88px;top:967.48px;width:12.25px;height:12.25px" viewBox="0 0 24 24" fill="none" stroke="#1b5a24" stroke-width="2" stroke-linecap="round" stroke-linejoin="round"><path d="M15 3h6v6"/><path d="M10 14 21 3"/><path d="M18 13v6a2 2 0 0 1-2 2H5a2 2 0 0 1-2-2V8a2 2 0 0 1 2-2h6"/></svg>
<div class="t" style="left:1121.90px;top:964.54px;font:400 14.3px/18px 'Liberation Sans',sans-serif;color:#1b5a24;letter-spacing:-0.239px;-webkit-text-stroke:0.22px #1b5a24;">View eCard</div>
<svg class="i" style="left:1243.13px;top:965.63px;width:15.74px;height:15.74px" viewBox="0 0 24 24" fill="none" stroke="#1b231d" stroke-width="1.7" stroke-linecap="round" stroke-linejoin="round"><path d="M13 2a9 9 0 0 1 9 9"/><path d="M13 6a5 5 0 0 1 5 5"/><path d="M13.832 16.568a1 1 0 0 0 1.213-.303l.355-.465A2 2 0 0 1 17 15h3a2 2 0 0 1 2 2v3a2 2 0 0 1-2 2A18 18 0 0 1 2 4a2 2 0 0 1 2-2h3a2 2 0 0 1 2 2v3a2 2 0 0 1-.8 1.6l-.468.351a1 1 0 0 0-.292 1.233 14 14 0 0 0 6.392 6.384"/></svg>
<svg class="i" style="left:1277.66px;top:965.66px;width:15.49px;height:15.49px" viewBox="0 0 24 24" fill="none" stroke="#1b231d" stroke-width="1.7" stroke-linecap="round" stroke-linejoin="round"><path d="M22 17a2 2 0 0 1-2 2H6.828a2 2 0 0 0-1.414.586l-2.202 2.202A.71.71 0 0 1 2 21.286V5a2 2 0 0 1 2-2h16a2 2 0 0 1 2 2z"/></svg>
<svg class="i" style="left:1312.05px;top:965.25px;width:16.51px;height:16.51px" viewBox="0 0 24 24" fill="none" stroke="#1b231d" stroke-width="1.7" stroke-linecap="round" stroke-linejoin="round"><rect width="5" height="5" x="3" y="3" rx="1"/><rect width="5" height="5" x="16" y="3" rx="1"/><rect width="5" height="5" x="3" y="16" rx="1"/><path d="M21 16h-3a2 2 0 0 0-2 2v3"/><path d="M21 21v.01"/><path d="M12 7v3a2 2 0 0 1-2 2H7"/><path d="M3 12h.01"/><path d="M12 3h.01"/><path d="M12 16v.01"/><path d="M16 12h1"/><path d="M21 12v.01"/><path d="M12 21v-1"/></svg>
<svg class="i" style="left:1347.24px;top:965.74px;width:15.52px;height:15.52px" viewBox="0 0 24 24" fill="none" stroke="#1b231d" stroke-width="1.7" stroke-linecap="round" stroke-linejoin="round"><path d="M14.536 21.686a.5.5 0 0 0 .937-.024l6.5-19a.496.496 0 0 0-.635-.635l-19 6.5a.5.5 0 0 0-.024.937l7.93 3.18a2 2 0 0 1 1.112 1.11z"/><path d="m21.854 2.147-10.94 10.939"/></svg>
<svg class="i" style="left:1381.44px;top:965.49px;width:16.01px;height:16.01px" viewBox="0 0 24 24" fill="none" stroke="#1b231d" stroke-width="1.7" stroke-linecap="round" stroke-linejoin="round"><path d="M12 7v14"/><path d="M3 18a1 1 0 0 1-1-1V4a1 1 0 0 1 1-1h5a4 4 0 0 1 4 4 4 4 0 0 1 4-4h5a1 1 0 0 1 1 1v13a1 1 0 0 1-1 1h-6a3 3 0 0 0-3 3 3 3 0 0 0-3-3z"/></svg>
<svg class="i" style="left:1415.81px;top:965.11px;width:16.77px;height:16.77px" viewBox="0 0 24 24" fill="none" stroke="#1b5a24" stroke-width="1.7" stroke-linecap="round" stroke-linejoin="round"><path d="m16 3 4 4-4 4"/><path d="M20 7H4"/><path d="m8 21-4-4 4-4"/><path d="M4 17h16"/></svg>
<svg class="i" style="left:1450.62px;top:965.27px;width:16.47px;height:16.47px" viewBox="0 0 24 24" fill="none" stroke="#dc2626" stroke-width="1.7" stroke-linecap="round" stroke-linejoin="round"><path d="M16 21v-2a4 4 0 0 0-4-4H6a4 4 0 0 0-4 4v2"/><circle cx="9" cy="7" r="4"/><line x1="22" x2="16" y1="11" y2="11"/></svg>
<div class="r" style="left:48.90px;top:1072.50px;width:1449.10px;height:1.20px;background:#e3e7e3"></div>
<div class="t" style="left:61.00px;top:1032.29px;font:400 14.3px/18px 'Liberation Mono',monospace;color:#56675b;letter-spacing:-0.808px;">0001116</div>
<div class="t" style="left:148.80px;top:1029.88px;font:400 16.5px/21px 'Liberation Sans',sans-serif;color:#1b5a24;letter-spacing:-0.460px;">Samuel Port</div>
<div class="r" style="left:645.20px;top:1031.40px;width:78.70px;height:20.50px;background:#1b2b1f;border-radius:11px"></div>
<div class="t" style="left:655.70px;top:1033.00px;font:400 12.4px/16px 'Liberation Sans',sans-serif;color:#fff;letter-spacing:0.356px;-webkit-text-stroke:0.45px #fff;">confirmed</div>
<div class="r" style="left:791.70px;top:1029.40px;width:86.00px;height:20.90px;background:#fde3e3;border-radius:11px"></div>
<svg class="i" style="left:801.86px;top:1034.06px;width:11.88px;height:11.88px" viewBox="0 0 24 24" fill="none" stroke="#9a2b2b" stroke-width="2" stroke-linecap="round" stroke-linejoin="round"><rect width="18" height="18" x="3" y="3" rx="2" ry="2"/><path d="m15 9-6 6"/><path d="m9 9 6 6"/></svg>
<div class="t" style="left:817.70px;top:1031.60px;font:400 12.4px/16px 'Liberation Sans',sans-serif;color:#9a2b2b;letter-spacing:-0.125px;-webkit-text-stroke:0.45px #9a2b2b;">No Show</div>
<div class="r" style="left:917.60px;top:1029.60px;width:62.50px;height:21.00px;background:#dcf8e2;border-radius:11px"></div>
<svg class="i" style="left:927.94px;top:1033.94px;width:12.11px;height:12.11px" viewBox="0 0 24 24" fill="none" stroke="#1b5a24" stroke-width="2" stroke-linecap="round" stroke-linejoin="round"><path d="M21.801 10A10 10 0 1 1 17 3.335"/><path d="m9 11 3 3L22 4"/></svg>
<div class="t" style="left:944.00px;top:1031.60px;font:400 12.4px/16px 'Liberation Sans',sans-serif;color:#1b5a24;letter-spacing:0.067px;-webkit-text-stroke:0.45px #1b5a24;">Sent</div>
<div class="r" style="left:1038.20px;top:1041.50px;width:9.00px;height:1.20px;background:#5f6e63"></div>
<div class="r" style="left:1145.00px;top:1041.50px;width:9.00px;height:1.20px;background:#5f6e63"></div>
<svg class="i" style="left:1243.13px;top:1032.13px;width:15.74px;height:15.74px" viewBox="0 0 24 24" fill="none" stroke="#1b231d" stroke-width="1.7" stroke-linecap="round" stroke-linejoin="round"><path d="M13 2a9 9 0 0 1 9 9"/><path d="M13 6a5 5 0 0 1 5 5"/><path d="M13.832 16.568a1 1 0 0 0 1.213-.303l.355-.465A2 2 0 0 1 17 15h3a2 2 0 0 1 2 2v3a2 2 0 0 1-2 2A18 18 0 0 1 2 4a2 2 0 0 1 2-2h3a2 2 0 0 1 2 2v3a2 2 0 0 1-.8 1.6l-.468.351a1 1 0 0 0-.292 1.233 14 14 0 0 0 6.392 6.384"/></svg>
<svg class="i" style="left:1277.66px;top:1032.16px;width:15.49px;height:15.49px" viewBox="0 0 24 24" fill="none" stroke="#1b231d" stroke-width="1.7" stroke-linecap="round" stroke-linejoin="round"><path d="M22 17a2 2 0 0 1-2 2H6.828a2 2 0 0 0-1.414.586l-2.202 2.202A.71.71 0 0 1 2 21.286V5a2 2 0 0 1 2-2h16a2 2 0 0 1 2 2z"/></svg>
<svg class="i" style="left:1312.05px;top:1031.75px;width:16.51px;height:16.51px" viewBox="0 0 24 24" fill="none" stroke="#1b231d" stroke-width="1.7" stroke-linecap="round" stroke-linejoin="round"><rect width="5" height="5" x="3" y="3" rx="1"/><rect width="5" height="5" x="16" y="3" rx="1"/><rect width="5" height="5" x="3" y="16" rx="1"/><path d="M21 16h-3a2 2 0 0 0-2 2v3"/><path d="M21 21v.01"/><path d="M12 7v3a2 2 0 0 1-2 2H7"/><path d="M3 12h.01"/><path d="M12 3h.01"/><path d="M12 16v.01"/><path d="M16 12h1"/><path d="M21 12v.01"/><path d="M12 21v-1"/></svg>
<svg class="i" style="left:1347.24px;top:1032.24px;width:15.52px;height:15.52px" viewBox="0 0 24 24" fill="none" stroke="#1b231d" stroke-width="1.7" stroke-linecap="round" stroke-linejoin="round"><path d="M14.536 21.686a.5.5 0 0 0 .937-.024l6.5-19a.496.496 0 0 0-.635-.635l-19 6.5a.5.5 0 0 0-.024.937l7.93 3.18a2 2 0 0 1 1.112 1.11z"/><path d="m21.854 2.147-10.94 10.939"/></svg>
<svg class="i" style="left:1381.44px;top:1031.99px;width:16.01px;height:16.01px" viewBox="0 0 24 24" fill="none" stroke="#1b231d" stroke-width="1.7" stroke-linecap="round" stroke-linejoin="round"><path d="M12 7v14"/><path d="M3 18a1 1 0 0 1-1-1V4a1 1 0 0 1 1-1h5a4 4 0 0 1 4 4 4 4 0 0 1 4-4h5a1 1 0 0 1 1 1v13a1 1 0 0 1-1 1h-6a3 3 0 0 0-3 3 3 3 0 0 0-3-3z"/></svg>
<svg class="i" style="left:1415.81px;top:1031.61px;width:16.77px;height:16.77px" viewBox="0 0 24 24" fill="none" stroke="#1b5a24" stroke-width="1.7" stroke-linecap="round" stroke-linejoin="round"><path d="m16 3 4 4-4 4"/><path d="M20 7H4"/><path d="m8 21-4-4 4-4"/><path d="M4 17h16"/></svg>
<svg class="i" style="left:1450.62px;top:1031.77px;width:16.47px;height:16.47px" viewBox="0 0 24 24" fill="none" stroke="#dc2626" stroke-width="1.7" stroke-linecap="round" stroke-linejoin="round"><path d="M16 21v-2a4 4 0 0 0-4-4H6a4 4 0 0 0-4 4v2"/><circle cx="9" cy="7" r="4"/><line x1="22" x2="16" y1="11" y2="11"/></svg>
<div class="r" style="left:48.90px;top:1139.00px;width:1449.10px;height:1.20px;background:#e3e7e3"></div>
<div class="t" style="left:61.00px;top:1098.49px;font:400 14.3px/18px 'Liberation Mono',monospace;color:#56675b;letter-spacing:-0.808px;">0001118</div>
<div class="t" style="left:148.80px;top:1096.08px;font:400 16.5px/21px 'Liberation Sans',sans-serif;color:#1b5a24;letter-spacing:-0.247px;">Arthur Klawender</div>
<div class="r" style="left:645.10px;top:1095.90px;width:99.10px;height:20.90px;background:#dcf8e2;border-radius:11px"></div>
<svg class="i" style="left:655.25px;top:1099.90px;width:12.50px;height:12.50px" viewBox="0 0 24 24" fill="none" stroke="#1b5a24" stroke-width="2" stroke-linecap="round" stroke-linejoin="round"><circle cx="12" cy="12" r="10"/><path d="m9 12 2 2 4-4"/></svg>
<div class="t" style="left:671.10px;top:1097.80px;font:400 12.4px/16px 'Liberation Sans',sans-serif;color:#1b5a24;letter-spacing:-0.006px;-webkit-text-stroke:0.45px #1b5a24;">Checked In</div>
<div class="r" style="left:785.80px;top:1095.90px;width:99.10px;height:20.90px;background:#dcf8e2;border-radius:11px"></div>
<svg class="i" style="left:795.93px;top:1099.98px;width:11.94px;height:11.94px" viewBox="0 0 24 24" fill="none" stroke="#1b5a24" stroke-width="2" stroke-linecap="round" stroke-linejoin="round"><path d="M21 10.5V19a2 2 0 0 1-2 2H5a2 2 0 0 1-2-2V5a2 2 0 0 1 2-2h12.5"/><path d="m9 11 3 3L22 4"/></svg>
<div class="t" style="left:812.20px;top:1097.80px;font:400 12.4px/16px 'Liberation Sans',sans-serif;color:#1b5a24;letter-spacing:0.169px;-webkit-text-stroke:0.45px #1b5a24;">Completed</div>
<div class="r" style="left:917.60px;top:1095.80px;width:62.50px;height:21.00px;background:#dcf8e2;border-radius:11px"></div>
<svg class="i" style="left:927.94px;top:1100.14px;width:12.11px;height:12.11px" viewBox="0 0 24 24" fill="none" stroke="#1b5a24" stroke-width="2" stroke-linecap="round" stroke-linejoin="round"><path d="M21.801 10A10 10 0 1 1 17 3.335"/><path d="m9 11 3 3L22 4"/></svg>
<div class="t" style="left:944.00px;top:1097.80px;font:400 12.4px/16px 'Liberation Sans',sans-serif;color:#1b5a24;letter-spacing:0.067px;-webkit-text-stroke:0.45px #1b5a24;">Sent</div>
<div class="r" style="left:1038.20px;top:1107.70px;width:9.00px;height:1.20px;background:#5f6e63"></div>
<svg class="i" style="left:1105.88px;top:1100.18px;width:12.25px;height:12.25px" viewBox="0 0 24 24" fill="none" stroke="#1b5a24" stroke-width="2" stroke-linecap="round" stroke-linejoin="round"><path d="M15 3h6v6"/><path d="M10 14 21 3"/><path d="M18 13v6a2 2 0 0 1-2 2H5a2 2 0 0 1-2-2V8a2 2 0 0 1 2-2h6"/></svg>
<div class="t" style="left:1121.90px;top:1097.24px;font:400 14.3px/18px 'Liberation Sans',sans-serif;color:#1b5a24;letter-spacing:-0.239px;-webkit-text-stroke:0.22px #1b5a24;">View eCard</div>
<svg class="i" style="left:1243.13px;top:1098.33px;width:15.74px;height:15.74px" viewBox="0 0 24 24" fill="none" stroke="#1b231d" stroke-width="1.7" stroke-linecap="round" stroke-linejoin="round"><path d="M13 2a9 9 0 0 1 9 9"/><path d="M13 6a5 5 0 0 1 5 5"/><path d="M13.832 16.568a1 1 0 0 0 1.213-.303l.355-.465A2 2 0 0 1 17 15h3a2 2 0 0 1 2 2v3a2 2 0 0 1-2 2A18 18 0 0 1 2 4a2 2 0 0 1 2-2h3a2 2 0 0 1 2 2v3a2 2 0 0 1-.8 1.6l-.468.351a1 1 0 0 0-.292 1.233 14 14 0 0 0 6.392 6.384"/></svg>
<svg class="i" style="left:1277.66px;top:1098.36px;width:15.49px;height:15.49px" viewBox="0 0 24 24" fill="none" stroke="#1b231d" stroke-width="1.7" stroke-linecap="round" stroke-linejoin="round"><path d="M22 17a2 2 0 0 1-2 2H6.828a2 2 0 0 0-1.414.586l-2.202 2.202A.71.71 0 0 1 2 21.286V5a2 2 0 0 1 2-2h16a2 2 0 0 1 2 2z"/></svg>
<svg class="i" style="left:1312.05px;top:1097.95px;width:16.51px;height:16.51px" viewBox="0 0 24 24" fill="none" stroke="#1b231d" stroke-width="1.7" stroke-linecap="round" stroke-linejoin="round"><rect width="5" height="5" x="3" y="3" rx="1"/><rect width="5" height="5" x="16" y="3" rx="1"/><rect width="5" height="5" x="3" y="16" rx="1"/><path d="M21 16h-3a2 2 0 0 0-2 2v3"/><path d="M21 21v.01"/><path d="M12 7v3a2 2 0 0 1-2 2H7"/><path d="M3 12h.01"/><path d="M12 3h.01"/><path d="M12 16v.01"/><path d="M16 12h1"/><path d="M21 12v.01"/><path d="M12 21v-1"/></svg>
<svg class="i" style="left:1347.24px;top:1098.44px;width:15.52px;height:15.52px" viewBox="0 0 24 24" fill="none" stroke="#1b231d" stroke-width="1.7" stroke-linecap="round" stroke-linejoin="round"><path d="M14.536 21.686a.5.5 0 0 0 .937-.024l6.5-19a.496.496 0 0 0-.635-.635l-19 6.5a.5.5 0 0 0-.024.937l7.93 3.18a2 2 0 0 1 1.112 1.11z"/><path d="m21.854 2.147-10.94 10.939"/></svg>
<svg class="i" style="left:1381.44px;top:1098.19px;width:16.01px;height:16.01px" viewBox="0 0 24 24" fill="none" stroke="#1b231d" stroke-width="1.7" stroke-linecap="round" stroke-linejoin="round"><path d="M12 7v14"/><path d="M3 18a1 1 0 0 1-1-1V4a1 1 0 0 1 1-1h5a4 4 0 0 1 4 4 4 4 0 0 1 4-4h5a1 1 0 0 1 1 1v13a1 1 0 0 1-1 1h-6a3 3 0 0 0-3 3 3 3 0 0 0-3-3z"/></svg>
<svg class="i" style="left:1415.81px;top:1097.81px;width:16.77px;height:16.77px" viewBox="0 0 24 24" fill="none" stroke="#1b5a24" stroke-width="1.7" stroke-linecap="round" stroke-linejoin="round"><path d="m16 3 4 4-4 4"/><path d="M20 7H4"/><path d="m8 21-4-4 4-4"/><path d="M4 17h16"/></svg>
<svg class="i" style="left:1450.62px;top:1097.97px;width:16.47px;height:16.47px" viewBox="0 0 24 24" fill="none" stroke="#dc2626" stroke-width="1.7" stroke-linecap="round" stroke-linejoin="round"><path d="M16 21v-2a4 4 0 0 0-4-4H6a4 4 0 0 0-4 4v2"/><circle cx="9" cy="7" r="4"/><line x1="22" x2="16" y1="11" y2="11"/></svg>
<div class="r" style="left:407.60px;top:888.80px;width:208.70px;height:14.00px;background:#000"></div>
<div class="r" style="left:407.60px;top:909.70px;width:208.70px;height:14.20px;background:#000"></div>
<div class="r" style="left:408.70px;top:955.80px;width:208.70px;height:14.20px;background:#000"></div>
<div class="r" style="left:407.60px;top:978.80px;width:208.70px;height:14.30px;background:#000"></div>
<div class="r" style="left:409.80px;top:1022.00px;width:207.60px;height:13.80px;background:#000"></div>
<div class="r" style="left:409.80px;top:1045.70px;width:208.20px;height:14.30px;background:#000"></div>
<div class="r" style="left:409.80px;top:1089.60px;width:207.60px;height:14.30px;background:#000"></div>
<div class="r" style="left:407.60px;top:1112.00px;width:208.70px;height:14.30px;background:#000"></div>
<svg class="i" style="left:0;top:0;width:1548px;height:1142px" viewBox="0 0 1548 1142" fill="none" stroke="#262626" stroke-width="0.95" stroke-linecap="round" stroke-linejoin="round"><path d="M325.5 907.6 C326 913 327 916.5 328.4 915.8 C330.2 915 331 911 330.6 907 C330.2 903 329.2 900.2 327.6 899"/><path d="M334 906.8 L335.6 910.2 L334.4 914.4"/><path d="M336.4 901.3 C337.5 906 338.5 911 339.4 914.4 C340 912 340.5 909.5 341 908.5 C342.5 909.5 344 912 345.3 912.7 C346.5 912.5 347.5 911.5 348.2 910.6 C347 910 346 910 345.3 910.4"/><path d="M357 912.7 C355 911.5 353.8 909.5 353.7 907 C353.5 903 353.5 899.5 354.2 898.2 C356 899.5 357.8 903.5 358.7 906.8 C359.2 908.5 359.7 909.8 360 909.6 C360.5 906 360.8 901 361.2 898.8 C361.8 901.5 362.2 904.5 362.5 906.8"/><path d="M364.6 907.2 C365.3 909.5 366 911.5 366.7 911.8 C367.8 911 368.5 909.8 369.2 909.3 C370 909.5 371 908.5 371.7 907.2"/></svg>
<svg class="i" style="left:0;top:0;width:1548px;height:1142px" viewBox="0 0 1548 1142" fill="none" stroke="#262626" stroke-width="0.95" stroke-linecap="round" stroke-linejoin="round"><path d="M331 959.2 C329.8 960 329.2 961 329.5 962 C331 966 333 971 334.3 974.7 C335.3 977 336.2 979 336.4 980.2 C337 982 337.8 984 337.7 985.3 C337.3 986.6 336.5 987.8 335.6 988.6"/><path d="M320.9 975.2 L342.7 976 C343.5 976.3 343.8 977 344.4 977.1 L358.7 977.3 C359.4 975 359.4 971.5 359.5 969.3 C362 965.5 366 962.5 370.5 960.5"/><path d="M320.9 981.9 C322.5 984.8 324.3 987 326.3 988.6"/></svg>
<svg class="i" style="left:0;top:0;width:1548px;height:1142px" viewBox="0 0 1548 1142" fill="none" stroke="#262626" stroke-width="0.95" stroke-linecap="round" stroke-linejoin="round"><path d="M329.2 1112.5 C331 1110.5 333 1109 334.2 1108.2 C339 1103 345 1097 350.2 1095.5 C346 1097 340 1103 335.3 1109.3"/><path d="M335.3 1117.5 C338 1110 345 1101 350.2 1096.2 C353.5 1095.5 356 1097 356.6 1099.4 C356 1102.5 351 1106 348.4 1107.9"/><path d="M342.4 1112.5 C345 1110.5 347 1108.5 347.8 1106.5 C348 1103 349.5 1100 350.5 1098.3"/><path d="M348.4 1108.6 C354 1108.8 361 1106.8 367.2 1106.5"/></svg>
<div class="r" style="left:345.00px;top:1040.80px;width:11.00px;height:1.20px;background:#5f6e63"></div>
<div class="r" style="left:1423.40px;top:1071.00px;width:102.60px;height:50.00px;background:#1447c9;border-radius:15px;box-shadow:0 5px 18px rgba(20,65,195,.45),0 0 55px 12px rgba(20,71,201,.13)"></div>
<svg class="i" style="left:1445.84px;top:1086.79px;width:18.22px;height:18.22px" viewBox="0 0 24 24" fill="none" stroke="#fff" stroke-width="2" stroke-linecap="round" stroke-linejoin="round"><circle cx="12" cy="12" r="10"/><path d="M9.09 9a3 3 0 0 1 5.83 1c0 2-3 3-3 3"/><path d="M12 17h.01"/></svg>
<div class="t" style="left:1474.50px;top:1087.94px;font:400 14.3px/18px 'Liberation Sans',sans-serif;color:#fff;letter-spacing:-0.233px;-webkit-text-stroke:0.45px #fff;">Help</div>
<div class="r" style="left:1544.00px;top:0.00px;width:4.00px;height:1142.00px;background:linear-gradient(180deg,#9c9c9c 0px,#a2a2a2 105px,#e0e0e0 135px,#dfe1df 250px,#a3b3a6 300px,#a9b8ac 330px,#dfe2df 360px,#e1e1e1 1040px,#c9cfdc 1100px,#bfc6d6 1142px);-webkit-mask:linear-gradient(90deg,rgba(0,0,0,.35),#000 1.2px)"></div>
</body></html>
